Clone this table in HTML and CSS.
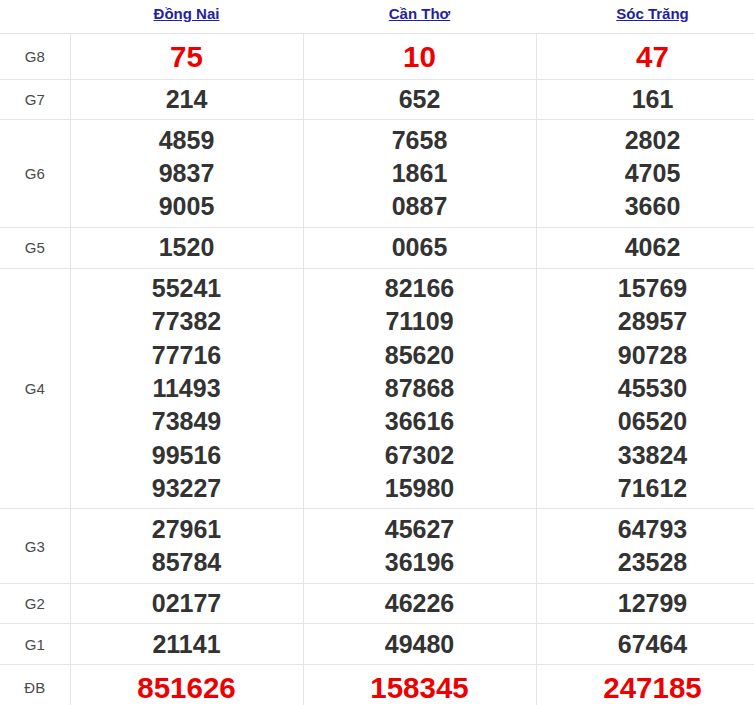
FILE: index.html
```html
<!DOCTYPE html>
<html lang="vi">
<head>
<meta charset="utf-8">
<link rel="stylesheet" href="styles.css">
</head>
<body>
<table class="kq">
  <colgroup><col class="c-label"><col class="c-prov"><col class="c-prov"><col class="c-prov"></colgroup>
  <thead>
    <tr class="head"><th></th><th><a href="#">Đồng Nai</a></th><th><a href="#">Cần Thơ</a></th><th><a href="#">Sóc Trăng</a></th></tr>
  </thead>
  <tbody>
    <tr class="g8"><td class="lbl">G8</td><td class="red">75</td><td class="red">10</td><td class="red">47</td></tr>
    <tr><td class="lbl">G7</td><td>214</td><td>652</td><td>161</td></tr>
    <tr><td class="lbl">G6</td><td>4859<br>9837<br>9005</td><td>7658<br>1861<br>0887</td><td>2802<br>4705<br>3660</td></tr>
    <tr><td class="lbl">G5</td><td>1520</td><td>0065</td><td>4062</td></tr>
    <tr><td class="lbl">G4</td><td>55241<br>77382<br>77716<br>11493<br>73849<br>99516<br>93227</td><td>82166<br>71109<br>85620<br>87868<br>36616<br>67302<br>15980</td><td>15769<br>28957<br>90728<br>45530<br>06520<br>33824<br>71612</td></tr>
    <tr><td class="lbl">G3</td><td>27961<br>85784</td><td>45627<br>36196</td><td>64793<br>23528</td></tr>
    <tr><td class="lbl">G2</td><td>02177</td><td>46226</td><td>12799</td></tr>
    <tr><td class="lbl">G1</td><td>21141</td><td>49480</td><td>67464</td></tr>
    <tr class="db"><td class="lbl">ĐB</td><td class="red">851626</td><td class="red">158345</td><td class="red">247185</td></tr>
  </tbody>
</table>
</body>
</html>
```

FILE: styles.css
```css
html, body {
  margin: 0;
  padding: 0;
  background: #fff;
  overflow: hidden;
}
body {
  font-family: "Liberation Sans", Arial, sans-serif;
}
.kq {
  border-collapse: collapse;
  width: 769px;
  table-layout: fixed;
}
.c-label { width: 70px; }
.c-prov { width: 233px; }
.kq th {
  height: 33px;
  padding: 0;
  font-size: 15px;
  line-height: 28px;
  font-weight: bold;
  text-align: center;
  vertical-align: top;
  border-bottom: 1px solid #e4e4e4;
}
.kq th a {
  color: #1f1fa3;
  text-decoration: underline;
}
.kq td {
  border: 1px solid #e4e4e4;
  text-align: center;
  vertical-align: middle;
  padding: 3.5px 0 3px;
  font-size: 25px;
  line-height: 33.33px;
  font-weight: bold;
  color: #333;
}
.kq td:first-child { border-left: none; }
.kq td.lbl {
  font-size: 15px;
  font-weight: normal;
  color: #4a4a4a;
}
.kq td.red {
  color: #ee0000;
  font-size: 29.5px;
  line-height: 38px;
}
```
